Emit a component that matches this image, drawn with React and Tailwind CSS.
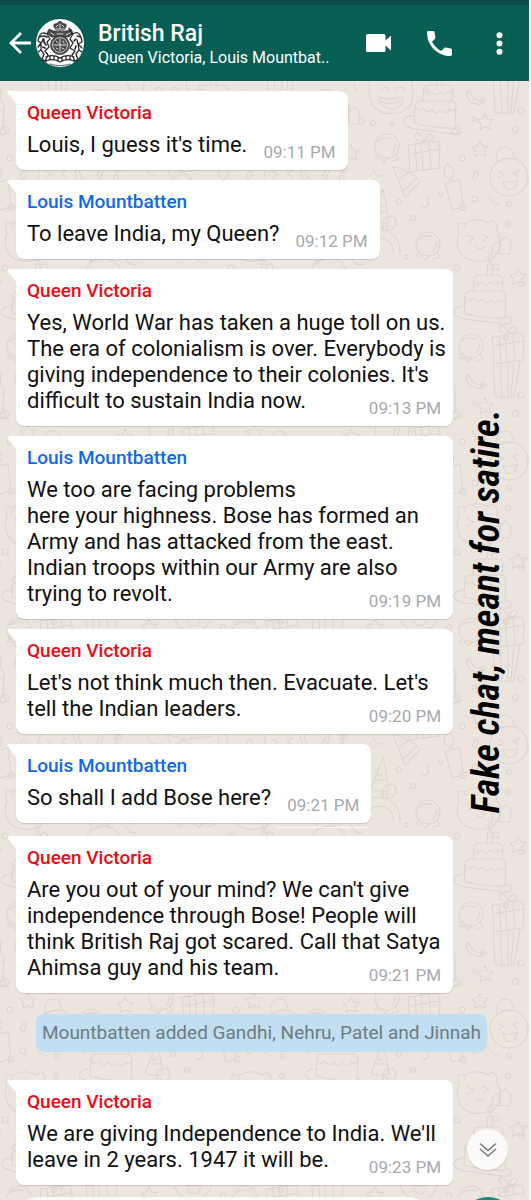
const messages = [
  { from: "Queen Victoria", text: "Louis, I guess it's time.", time: "09:11 PM" },
  { from: "Louis Mountbatten", text: "To leave India, my Queen?", time: "09:12 PM" },
  {
    from: "Queen Victoria",
    text: "Yes, World War has taken a huge toll on us. The era of colonialism is over. Everybody is giving independence to their colonies. It's difficult to sustain India now.",
    time: "09:13 PM",
  },
  {
    from: "Louis Mountbatten",
    text: "We too are facing problems\nhere your highness. Bose has formed an Army and has attacked from the east. Indian troops within our Army are also trying to revolt.",
    time: "09:19 PM",
  },
  {
    from: "Queen Victoria",
    text: "Let's not think much then. Evacuate. Let's tell the Indian leaders.",
    time: "09:20 PM",
  },
  { from: "Louis Mountbatten", text: "So shall I add Bose here?", time: "09:21 PM" },
];

const laterMessages = [
  {
    from: "Queen Victoria",
    text: "Are you out of your mind? We can't give independence through Bose! People will think British Raj got scared. Call that Satya Ahimsa guy and his team.",
    time: "09:21 PM",
  },
];

const lastMessages = [
  {
    from: "Queen Victoria",
    text: "We are giving Independence to India. We'll leave in 2 years. 1947 it will be.",
    time: "09:23 PM",
  },
];

const nameColors = {
  "Queen Victoria": "text-[#ee0a14]",
  "Louis Mountbatten": "text-[#0f69ee]",
};

function Message({ from, text, time }) {
  return (
    <li className="relative w-fit max-w-[89%] rounded-lg rounded-tl-none bg-white pt-2.5 pr-0.5 pb-2 pl-[11px] shadow-[0_1px_1px_rgba(0,0,0,0.14)]">
      <svg className="absolute top-0 -left-[9px] h-[14px] w-[10px]" viewBox="0 0 10 14" aria-hidden="true">
        <path d="M1.6 0H10V14L0.6 2Q-.4 .3 1.6 0Z" fill="#fff" />
      </svg>
      <h2 className={`text-[19px] leading-6 font-medium ${nameColors[from]}`}>{from}</h2>
      <p className="mt-[7px] flow-root text-[22px] leading-[26px] whitespace-pre-line text-[#111]">
        {text}
        <time className="float-right mt-2.5 mr-2.5 ml-4 text-[17px] leading-5 text-[#a6a9ae]">{time}</time>
      </p>
    </li>
  );
}

function MessageList({ items }) {
  return (
    <ol className="flex flex-col gap-2.5">
      {items.map((m) => (
        <Message key={m.text} {...m} />
      ))}
    </ol>
  );
}

function Wallpaper() {
  return (
    <svg className="absolute inset-0 h-full w-full" aria-hidden="true">
      <defs>
        <g id="star">
          <path d="M0-8L2.6-3 8-2.4 4.4 1.6 5.4 7 0 4.8-5 7.4-4.4 1.8-8-2 -2.6-3Z" />
        </g>
        <g id="cake">
          <path d="M-33 12Q-36 18-22 21L16 26Q27 27 23 20L18 17M-33 12Q-30 8-24 8M-23 15L-22-3Q-21-7-16-7H14Q19-6 19-2L18 20Q-2 21-23 15ZM-22-1Q-18 5-14 0 -10 7-5 1-1 8 4 2 9 8 13 1 16 5 19 0M-14-7L-13-20Q-12-23-8-23H11Q16-22 16-18L15-7M-13-17Q-9-11-5-16-1-11 4-16 8-11 11-16L15-15M0-23L1-34H5L5-23M3-36Q-1-40 3-45 8-40 3-36" />
        </g>
        <g id="candy">
          <circle r="12" />
          <path d="M-9-5Q-3-10 5-7M-9 8L-12 12-6 12-3 16 1 12M9 8L12 13 5 15M8-2Q9 3 5 7" />
        </g>
        <g id="gift">
          <path d="M-16-8L14-12 16-4-15 1ZM-15 1L-14 19 15 15 16-4M-9-9L-7 18M-3-10L-1 17M5-11L7 16M-1-11Q-12-14-8-20-3-20 0-12 4-21 9-18 11-12 0-12" />
        </g>
        <g id="face">
          <circle r="19" />
          <path d="M-11-6L-5-3-11 1M10-7L4-4 9 0M-6 4Q1 7 8 3 7 13 1 13-5 12-6 4ZM-12-15Q-14-30-3-30 4-30 5-19M-13-14Q-2-21 9-17" />
        </g>
        <g id="cat">
          <path d="M-21-8Q-25-22-16-17-4-25 8-18 18-25 17-10 25 6 14 16-2 25-16 16-26 7-21-8ZM-13-6L-6-3-12 1M2-7L8-4 3 0M-4 6Q1 10 5 5M13 4L26-4Q34 1 29 13L12 12ZM19 1L20 12M-17-12L-14-16" />
        </g>
        <pattern id="party" x="77" y="0" width="226" height="284" patternUnits="userSpaceOnUse">
          <g fill="none" stroke="#ddd5cc" strokeWidth="1.1" strokeLinejoin="round" strokeLinecap="round">
            <path d="M66 9Q66-3 74-8M110 10Q110-2 104-8M66 9Q66 32 88 33 112 32 110 9M78 9Q82 3 86 9M93 9Q98 3 102 9M76 16Q88 20 100 16 99 28 88 28 77 27 76 16ZM78 21Q88 24 98 20" />
            <use href="#cake" x="134" y="27" />
            <use href="#candy" x="84" y="65" />
            <use href="#gift" x="121" y="72" />
            <path d="M190-5L192 31Q202 34 211 31L217-5M197-5L199 32M205-5V32M211-5L208 32M190 279L192 315M217 279L211 315" />
            <use href="#face" x="206" y="96" />
            <use href="#star" x="182" y="41" />
            <use href="#star" x="177" y="68" />
            <path d="M90 86L102 116 117 101Q108 88 90 86ZM95 99L106 91M100 110L114 97M142 102L157 99 160 126 149 129ZM147 99Q137 94 144 82 156 92 147 99" />
            <path d="M165 9L171 18 180 21Q178 26 168 21 161 17 165 9ZM70 87Q72 96 80 95M124 115Q129 127 119 126M186 114Q188 123 196 123M172 90Q178 89 173 98 167 101 172 90M211 46Q218 43 214 51 207 53 211 46" />
            <path d="M80 108L68 140Q77 144 86 141ZM71 131H84M75 125A2 2 0 1 0 79 125" />
            <use href="#cat" x="177" y="160" />
            <use href="#candy" x="125" y="163" />
            <path d="M57 175Q55 150 75 148 98 150 97 175M62 173Q66 157 76 157 90 158 91 173M80 148Q78 135 90 135 97 142 88 149" />
            <use href="#cake" x="184" y="217" />
            <use href="#candy" x="168" y="265" />
            <use href="#star" x="215" y="196" />
            <use href="#star" x="142" y="202" />
            <use href="#gift" x="82" y="210" />
            <use href="#face" x="116" y="248" />
            <use href="#gift" x="205" y="264" />
            <use href="#cat" x="26" y="30" />
            <use href="#star" x="48" y="72" />
            <use href="#candy" x="14" y="88" />
            <use href="#cake" x="36" y="128" />
            <use href="#face" x="26" y="196" />
            <use href="#star" x="56" y="222" />
            <use href="#gift" x="24" y="252" />
            <use href="#star" x="72" y="262" />
            <path d="M48 176Q52 186 60 183M6 160L12 168M139 232Q147 232 142 242M50 2L54 10" />
            <g>
              <circle cx="124" cy="10" r="1.5" /><circle cx="58" cy="40" r="2.5" /><circle cx="180" cy="19" r="2" />
              <circle cx="70" cy="42" r="2.5" /><circle cx="89" cy="43" r="2" /><circle cx="218" cy="30" r="3" />
              <circle cx="152" cy="51" r="3" /><circle cx="171" cy="38" r="2" /><circle cx="159" cy="77" r="3" />
              <circle cx="96" cy="121" r="2.5" /><circle cx="160" cy="126" r="3" /><circle cx="138" cy="113" r="2" />
              <circle cx="172" cy="118" r="3" /><circle cx="206" cy="123" r="2.5" /><circle cx="205" cy="143" r="2.5" />
              <circle cx="82" cy="147" r="2.5" /><circle cx="110" cy="137" r="2.5" /><circle cx="103" cy="176" r="2" />
              <circle cx="154" cy="187" r="3" /><circle cx="193" cy="186" r="3" /><circle cx="219" cy="203" r="2.5" />
              <circle cx="203" cy="257" r="2.5" /><circle cx="42" cy="88" r="2.5" /><circle cx="6" cy="118" r="2" />
              <circle cx="60" cy="110" r="2" /><circle cx="46" cy="160" r="2.5" /><circle cx="4" cy="222" r="2" />
              <circle cx="50" cy="268" r="2.5" /><circle cx="100" cy="280" r="2" /><circle cx="146" cy="262" r="2.5" />
            </g>
          </g>
        </pattern>
      </defs>
      <rect width="100%" height="100%" fill="url(#party)" />
    </svg>
  );
}

function CrestAvatar() {
  return (
    <svg className="h-12 w-12 shrink-0" viewBox="0 0 48 48" role="img" aria-label="Royal coat of arms">
      <circle cx="24" cy="24" r="24" fill="#fff" />
      <g fill="#4a4a4a" stroke="#222" strokeWidth=".6">
        <path d="M18 8Q17 4 20 5L24 2 28 5Q31 4 30 8L28 11H20Z" />
        <path d="M13 10Q18 13 24 12 30 13 35 10L37 14 33 18H15L11 14Z" />
        <circle cx="24" cy="26" r="9.500" />
      </g>
      <g fill="none" stroke="#2a2a2a" strokeWidth="1.300" strokeLinecap="round" strokeLinejoin="round">
        <path d="M11 15Q5 12 3 18L2 22 5 24 2 28M11 15L14 20 11 23 13 28 9 32 12 36 9 42M3 18L7 17M5 24L8 20M5 24L5 31 2 33M5 31L8 35 6 41 10 42" />
        <path d="M8 17L11 18M8 23L10 26M7 28L9 29M7 20L8 22" strokeWidth="1.800" />
        <path d="M37 15Q42 11 45 18L46 23 42 25 46 29M37 15L34 20 37 24 34 29 39 32 36 36 39 42M45 18L41 17M42 25L41 21M42 25L43 31 46 33M43 31L40 35 42 41 38 42M36 15L33 9" />
        <path d="M40 20L38 22M40 27L39 30" strokeWidth="1.600" />
        <path d="M10 38Q17 35 24 39 31 35 38 38M10 42Q17 39 24 43 31 39 38 42M14 37V41M18 37V40M22 38V42M26 38V42M30 37V40M34 37V41" />
        <path d="M14 45Q24 48 34 45" strokeWidth=".8" strokeDasharray="2 1" />
      </g>
      <g fill="none" stroke="#eee" strokeWidth=".9" strokeLinecap="round">
        <path d="M20 8L22 6M24 9V5M28 8L26 6M20 10H28M15 14L18 16M21 15H27M30 16L34 14" />
        <circle cx="24" cy="26" r="7.400" strokeDasharray="1.600 1" />
        <path d="M24 20V32M18 26H30M20 22L22 24M27 22L28 24M20 29L22 30M26 29L28 30" />
      </g>
    </svg>
  );
}

function Header() {
  return (
    <header className="relative z-10 border-t-[5px] border-[#094d46] bg-[#075e54] text-white">
      <div className="flex h-19 items-center pr-[18px] pl-2">
        <button type="button" aria-label="Back" className="mr-1 shrink-0">
          <svg className="h-6 w-6" viewBox="0 0 24 24" fill="none" stroke="currentColor" strokeWidth="2.800">
            <path d="M23 12H3M13 2L3 12 13 22" />
          </svg>
        </button>
        <CrestAvatar />
        <div className="ml-3.5 min-w-0 flex-1 pt-0.5">
          <h1 className="truncate text-[23px] leading-7 font-medium">British Raj</h1>
          <p className="truncate text-[16px] leading-5">Queen Victoria, Louis Mountbat..</p>
        </div>
        <div className="flex shrink-0 items-center gap-9">
          <button type="button" aria-label="Video call">
            <svg className="h-[18px] w-[25px]" viewBox="0 0 25 18" fill="currentColor">
              <path d="M1.5 0H18Q19.500 0 19.500 1.500V6.500L25 1.500V16.500L19.500 11.500V16.500Q19.500 18 18 18H1.500Q0 18 0 16.500V1.500Q0 0 1.500 0Z" />
            </svg>
          </button>
          <button type="button" aria-label="Voice call">
            <svg className="h-[25px] w-[25px]" viewBox="3 3 18 18" fill="currentColor">
              <path d="M6.620 10.790c1.440 2.830 3.760 5.140 6.590 6.590l2.200-2.200c.270-.270.670-.360 1.020-.240 1.120.370 2.330.570 3.570.570.550 0 1 .450 1 1V20c0 .550-.450 1-1 1-9.390 0-17-7.610-17-17 0-.550.450-1 1-1h3.500c.550 0 1 .450 1 1 0 1.250.200 2.450.570 3.570.110.350.030.740-.250 1.020l-2.200 2.200z" />
            </svg>
          </button>
          <button type="button" aria-label="More options" className="px-2">
            <svg className="h-[23px] w-[7px]" viewBox="0 0 7 23" fill="currentColor">
              <circle cx="3.500" cy="3.200" r="3" />
              <circle cx="3.500" cy="11.500" r="3" />
              <circle cx="3.500" cy="19.800" r="3" />
            </svg>
          </button>
        </div>
      </div>
    </header>
  );
}

export default function App() {
  return (
    <div className="h-screen bg-[#f8f6f4] pr-0.5 font-['Roboto',sans-serif]">
      <div className="flex h-full flex-col overflow-hidden bg-[#ece5de]">
        <Header />
        <main className="relative flex-1 pt-2.5 pr-[22px] pl-4">
          <Wallpaper />
          <div className="relative">
            <MessageList items={messages} />
            <div className="mt-1 mb-2 ml-[259px] h-px w-[94px] rounded-b-lg bg-white/80" />
            <MessageList items={laterMessages} />
            <p className="mx-auto mt-[21px] mb-7 w-fit rounded-lg bg-[#c1dff0] px-1.5 py-[7px] text-[19px] leading-6 text-[#6f7b82]">
              Mountbatten added Gandhi, Nehru, Patel and Jinnah
            </p>
            <MessageList items={lastMessages} />
          </div>
          <p className="absolute top-[328px] right-[21px] rotate-180 font-['Roboto_Condensed',Roboto,sans-serif] text-[38px] leading-[44px] font-semibold whitespace-nowrap text-black italic [writing-mode:vertical-rl]">
            Fake chat, meant for satire.
          </p>
          <button
            type="button"
            aria-label="Scroll to latest message"
            className="absolute right-[21px] bottom-[27px] flex h-[41px] w-[41px] items-center justify-center rounded-full bg-[#fbfaf9] shadow-[0_1px_1px_rgba(0,0,0,0.12)]"
          >
            <svg className="h-4 w-[18px]" viewBox="0 0 18 16" fill="none" stroke="#777" strokeWidth="1.500">
              <path d="M1 1.500L9 8.500 17 1.500M1 7L9 14 17 7" />
            </svg>
          </button>
        </main>
        <footer className="relative flex h-[3px] shrink-0 items-start justify-between pr-[14px] pl-3">
          <div className="h-14 w-[84%] shrink-0 rounded-[28px] bg-[#fcfbfa]" />
          <div className="h-[54px] w-[54px] shrink-0 rounded-full bg-[#128c7e]" />
        </footer>
      </div>
    </div>
  );
}
